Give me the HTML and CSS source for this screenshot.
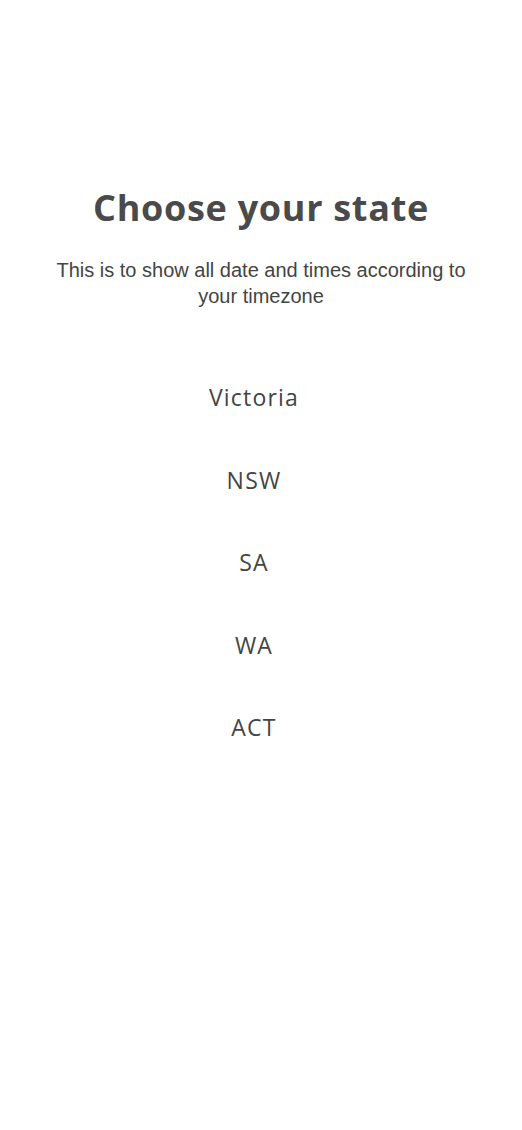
FILE: index.html
```html
<!DOCTYPE html>
<html>
<head>
<meta charset="utf-8">
<link rel="stylesheet" href="styles.css">
</head>
<body>
<main class="screen">
  <h1 class="title">Choose your state</h1>
  <p class="subtitle">This is to show all date and times according to your timezone</p>
  <ul class="states">
    <li class="state">Victoria</li>
    <li class="state">NSW</li>
    <li class="state">SA</li>
    <li class="state">WA</li>
    <li class="state">ACT</li>
  </ul>
</main>
</body>
</html>
```
FILE: styles.css
```css
html, body {
  margin: 0;
  padding: 0;
  background: #ffffff;
}
.screen {
  width: 522px;
  height: 1130px;
  display: flex;
  flex-direction: column;
  align-items: center;
  padding-top: 185px;
  box-sizing: border-box;
}
.title {
  margin: 0;
  font-family: "Open Sans", sans-serif;
  font-weight: 700;
  font-size: 36px;
  line-height: 46px;
  color: #4a4a4a;
  letter-spacing: 0.7px;
}
.subtitle {
  margin: 26px 0 0;
  width: 430px;
  text-align: center;
  font-family: "Liberation Sans", Arial, sans-serif;
  font-size: 20px;
  line-height: 26px;
  color: #444444;
}
.states {
  list-style: none;
  margin: 73px 0 0;
  padding: 0 14px 0 0;
  display: flex;
  flex-direction: column;
  align-items: center;
  gap: 52.5px;
}
.state {
  font-family: "Open Sans", sans-serif;
  font-size: 23px;
  line-height: 30px;
  color: #444444;
  letter-spacing: 1.2px;
}
```
